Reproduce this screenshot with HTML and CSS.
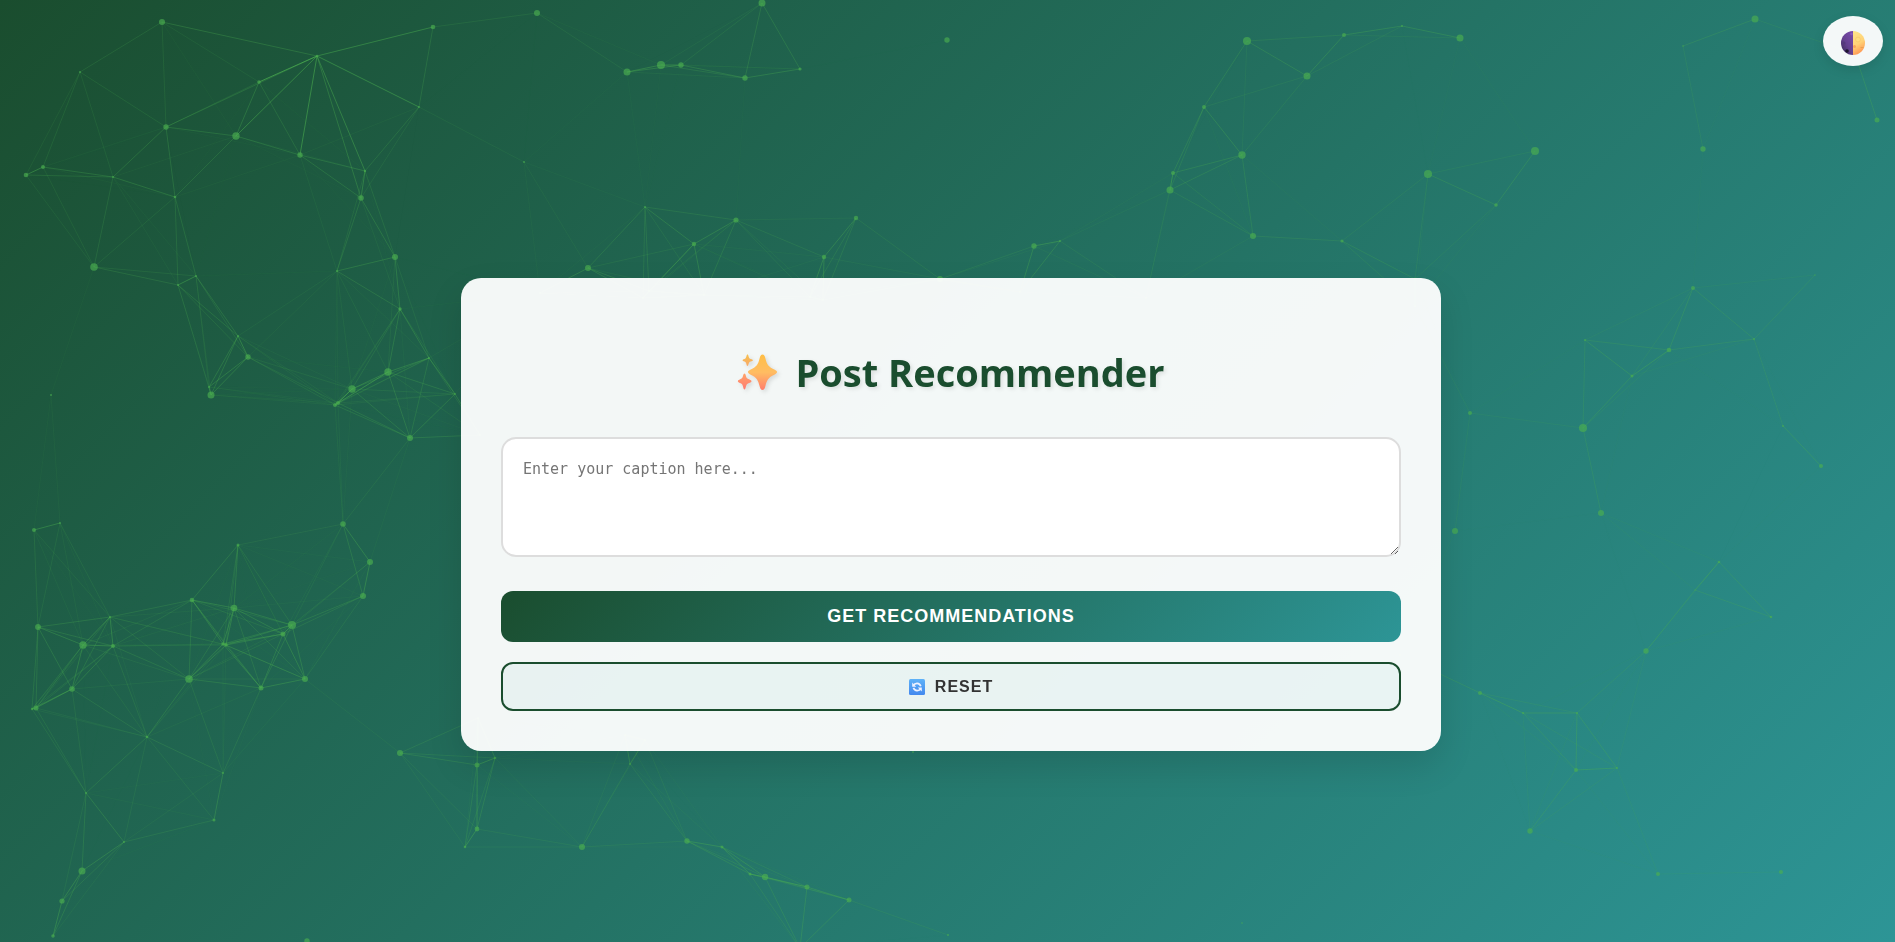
FILE: index.html
```html
<!DOCTYPE html>
<html lang="en">
<head>
<meta charset="utf-8">
<meta name="viewport" content="width=device-width, initial-scale=1">
<title>Post Recommender</title>
<link rel="stylesheet" href="styles.css">
</head>
<body>
<svg class="network" id="network" viewBox="0 0 1895 942" preserveAspectRatio="xMidYMid slice" aria-hidden="true"></svg>

<button class="theme-toggle" type="button" aria-label="Toggle theme">
  <svg class="moon" viewBox="0 0 24 24" aria-hidden="true">
    <defs>
      <linearGradient id="moonLight" x1="0" y1="0" x2="0.3" y2="1">
        <stop offset="0" stop-color="#ffe58a"/><stop offset="0.6" stop-color="#ffd277"/><stop offset="1" stop-color="#ff9a55"/>
      </linearGradient>
      <linearGradient id="moonDark" x1="1" y1="0" x2="0.2" y2="1">
        <stop offset="0" stop-color="#7a4cae"/><stop offset="0.6" stop-color="#64408f"/><stop offset="1" stop-color="#3d2d5c"/>
      </linearGradient>
    </defs>
    <path d="M12 0A12 12 0 0 0 12 24Z" fill="url(#moonDark)"/>
    <path d="M12 0A12 12 0 0 1 12 24Z" fill="url(#moonLight)"/>
    <circle cx="17" cy="8.500" r="2.400" fill="#ffdd80" stroke="#f6c566" stroke-width=".6"/>
    <circle cx="13.500" cy="15.500" r="1.500" fill="#f7a45c"/>
    <ellipse cx="21" cy="16.500" rx="1.800" ry=".5" fill="#e9a04f"/>
    <circle cx="10.500" cy="3" r="1.300" fill="#8a59bd"/>
    <circle cx="6" cy="20" r="1.800" fill="#1d1430"/>
    <circle cx="3" cy="12" r="1.500" fill="#54397c"/>
  </svg>
</button>

<main class="page">
  <section class="card">
    <h1 class="title">
      <svg class="sparkles" viewBox="0 0 40 38" aria-hidden="true">
        <defs>
          <linearGradient id="spark" x1="0" y1="0" x2="0" y2="1">
            <stop offset="0" stop-color="#ffbe45"/><stop offset="0.5" stop-color="#ffbd62"/><stop offset="1" stop-color="#ff7d6c"/>
          </linearGradient>
          <linearGradient id="sparkTop" x1="0" y1="0" x2="0" y2="1">
            <stop offset="0" stop-color="#f6c04e"/><stop offset="1" stop-color="#f9a968"/>
          </linearGradient>
          <linearGradient id="sparkLow" x1="0" y1="0" x2="0" y2="1">
            <stop offset="0" stop-color="#ffa368"/><stop offset="1" stop-color="#ff7a72"/>
          </linearGradient>
        </defs>
        <path fill="url(#spark)" d="M25.500 1.500C27 1.500 27.700 3 28.300 5C29.900 11.500 31.300 13.700 37.300 16.600C39.200 17.500 40 18.200 40 19.100S39.200 20.800 37.300 21.700C31.300 24.500 29.900 26.900 28.300 33.500C27.700 35.500 27 37 25.500 37S23.300 35.500 22.700 33.500C21.100 26.900 19.700 24.500 13.700 21.700C11.800 20.800 11 20 11 19.100S11.800 17.500 13.700 16.600C19.700 13.700 21.100 11.500 22.700 5C23.300 3 24 1.500 25.500 1.500Z"/>
        <path fill="url(#sparkTop)" d="M10.500 1.500C11.600 1.500 11.400 4.300 12.600 5.400C13.600 6.200 16 6.200 16 7.200S13.600 8.200 12.600 9.100C11.400 10.200 11.600 13 10.500 13S9.600 10.200 8.400 9.100C7.400 8.200 5.500 8.200 5.500 7.200S7.400 6.200 8.400 5.400C9.600 4.300 9.400 1.500 10.500 1.500Z"/>
        <path fill="url(#sparkLow)" d="M7.500 20.500C8.900 20.500 8.700 23.900 10.100 25.300C11.600 26.600 14.500 26.800 14.500 28.200S11.600 29.800 10.100 31.100C8.700 32.500 8.900 36.500 7.500 36.500S6.300 32.500 4.900 31.100C3.400 29.800 .800 29.600 .800 28.200S3.400 26.600 4.900 25.300C6.300 23.900 6.100 20.500 7.500 20.500Z"/>
      </svg>
      <span>Post Recommender</span>
    </h1>
    <form class="form">
      <textarea class="caption" aria-label="Caption" placeholder="Enter your caption here..."></textarea>
      <button class="btn btn-primary" type="button">GET RECOMMENDATIONS</button>
      <button class="btn btn-reset" type="reset">
        <svg class="refresh" viewBox="0 0 16 16" aria-hidden="true">
          <defs>
            <linearGradient id="tile" x1="0" y1="0" x2="0" y2="1">
              <stop offset="0" stop-color="#5fb2f8"/><stop offset="1" stop-color="#4388ee"/>
            </linearGradient>
          </defs>
          <rect width="16" height="16" rx="1.500" fill="url(#tile)"/>
          <path d="M4.200 6.600C6.200 3.500 10.500 3.700 11.800 7.300M11.900 9.600C10 12.500 5.800 12.400 4.400 8.900" fill="none" stroke="#eef1ff" stroke-width="1.700"/>
          <path d="M3.200 3.600V7.700H7.200ZM12.800 12.500V8.400H8.800Z" fill="#eef1ff"/>
        </svg>
        <span>RESET</span>
      </button>
    </form>
  </section>
</main>
<script src="network.js"></script>
</body>
</html>
```
FILE: styles.css
```css
* {
  box-sizing: border-box;
}

body {
  margin: 0;
  min-height: 100vh;
  background: linear-gradient(135deg, #1a4d2e, #2d9596) fixed;
  color: #333;
  font-family: "Segoe UI", "Open Sans", "Noto Sans", sans-serif;
}

.network {
  position: fixed;
  inset: 0;
  width: 100%;
  height: 100%;
}

.network line {
  stroke: #4caf50;
  stroke-width: 1;
}

.network circle {
  fill: #4caf50;
  fill-opacity: 0.65;
}

.theme-toggle {
  position: fixed;
  top: 16px;
  right: 12px;
  z-index: 2;
  display: flex;
  align-items: center;
  justify-content: center;
  width: 60px;
  height: 50px;
  padding: 3px 0 0;
  border: 0;
  border-radius: 50%;
  background: rgba(255, 255, 255, 0.95);
  box-shadow: 0 4px 12px rgba(0, 0, 0, 0.1);
  cursor: pointer;
}

.moon {
  width: 24px;
  height: 24px;
}

.page {
  position: relative;
  display: flex;
  align-items: center;
  justify-content: center;
  min-height: 100vh;
  padding: 106px 20px 20px 27px;
}

.card {
  width: 100%;
  max-width: 980px;
  padding: 40px;
  border-radius: 20px;
  background: rgba(255, 255, 255, 0.95);
  box-shadow: 0 15px 35px rgba(0, 0, 0, 0.12);
}

.title {
  display: flex;
  align-items: center;
  justify-content: center;
  gap: 18px;
  margin: 27px 0 38px;
  color: #1a4d2e;
  font-size: 38px;
  font-weight: 700;
  line-height: 54px;
  text-shadow: 2px 2px 4px rgba(0, 0, 0, 0.1);
}

.sparkles {
  width: 40px;
  height: 38px;
  filter: drop-shadow(2px 2px 2px rgba(0, 0, 0, 0.12));
}

.form {
  display: flex;
  flex-direction: column;
  gap: 20px;
}

.caption {
  display: block;
  width: 100%;
  height: 120px;
  margin-bottom: 14px;
  padding: 20px;
  border: 2px solid #ddd;
  border-radius: 15px;
  background: #fff;
  color: #333;
  font-family: Consolas, "DejaVu Sans Mono", monospace;
  font-size: 15px;
  line-height: 20px;
  resize: vertical;
}

.caption::placeholder {
  color: #757575;
}

.btn {
  display: flex;
  align-items: center;
  justify-content: center;
  gap: 10px;
  width: 100%;
  border-radius: 12px;
  font-family: "Liberation Sans", Arial, sans-serif;
  font-weight: 700;
  letter-spacing: 1px;
  cursor: pointer;
}

.btn-primary {
  height: 51px;
  border: 0;
  background: linear-gradient(135deg, #1a4d2e, #2d9596);
  color: #fff;
  font-size: 18px;
}

.btn-reset {
  height: 49px;
  padding: 2px 0 0;
  border: 2px solid #1a4d2e;
  background: rgba(45, 149, 150, 0.05);
  color: #333;
  font-size: 16px;
}

.refresh {
  width: 16px;
  height: 16px;
}
```
FILE: network.js
```js
// Decorative particle network: each entry is [x, y, radius].
const nodes = [
  [162,22,3],[80,72,1],[26,175,2.3],[43,167,2],[166,127,2.7],[113,177,1],[236,136,3.7],[259,82,1.8],
  [433,27,2.3],[419,107,1],[300,155,2.7],[365,171,1.2],[361,198,2.8],[175,197,1.3],[94,267,3.8],
  [337,271,1],[395,257,3],[178,285,1],[196,276,1],[238,336,1],[248,357,2.7],[209,387,1],[211,395,3.5],
  [51,395,1],[335,405,2],[338,403,2],[352,389,3.7],[388,372,3.7],[400,309,1.7],[429,358,1],[455,394,1],
  [410,438,3],[343,524,2.8],[34,530,2],[60,523,1],[238,545,1.5],[370,562,3],[363,596,3],[192,600,2.3],
  [234,608,3.3],[292,625,4],[283,634,2.5],[223,644,1.7],[226,645,1.7],[305,679,3],[261,688,2.5],
  [189,679,3.8],[110,617,1],[38,627,2.9],[83,645,3.7],[113,646,2],[72,689,2.8],[36,708,2.5],[32,709,1.2],
  [147,737,1.3],[86,793,1],[223,773,1],[214,820,1.5],[124,842,1],[82,871,3.5],[62,901,2.6],[53,936,1.8],
  [307,941,2.7],[400,753,3],[477,765,2.5],[495,758,1.3],[477,829,2.4],[465,847,1.3],[582,847,3],
  [630,764,1],[687,841,2.7],[722,847,1.5],[750,874,1.5],[765,877,3.2],[807,887,2.5],[849,900,2.5],
  [948,935,1],[800,948,1],[913,752,1],[537,13,3],[627,72,3.5],[661,65,4],[681,65,2.7],[745,78,2.7],
  [800,69,1.6],[762,3,3.5],[524,162,1],[588,268,3],[645,207,1],[694,244,2.2],[736,220,2.6],[824,257,2.2],
  [856,218,2.2],[947,40,2.7],[1247,41,4],[1344,35,2],[1402,26,1],[1307,76,3.5],[1204,107,2],
  [1242,155,3.7],[1173,173,2],[1170,190,3.5],[1253,236,3],[1342,241,1.6],[1428,174,4],[1060,241,1],
  [1034,246,2.7],[940,279,3],[1415,279,1.5],[1460,38,3.5],[1755,19,3.5],[1683,46,0.8],[1703,149,2.7],
  [1877,120,2.5],[1535,151,4],[1496,205,1.8],[1855,54,1],[1693,288,2],[1815,275,0.7],[1585,340,1],
  [1669,350,2.3],[1632,376,1.5],[1583,428,4],[1754,339,1],[1783,426,1],[1821,466,2],[1470,413,2],
  [1601,513,3],[1455,531,3],[1719,562,1.3],[1695,590,0.6],[1771,617,1.3],[1646,651,2.7],[1480,693,2],
  [1523,713,1],[1577,713,1],[1576,770,2],[1617,768,1],[1530,831,2.7],[1658,874,2],[1781,872,2],
  [1242,923,0.8],[540,293,1],[649,291,1],[643,298,1],[704,295,1],[823,300,1],[810,297,1],
  [1020,292,1],[1146,298,1],[1415,306,1],[1400,655,1],[480,435,1],[478,718,1],[625,735,1],[645,740,1]
];

// The focus point draws brighter links to the particles around it.
const focus = [317, 56];
const reach = 154;
const focusReach = 170;

const svgNS = "http://www.w3.org/2000/svg";
const network = document.getElementById("network");

function add(name, attributes) {
  const element = document.createElementNS(svgNS, name);
  for (const key in attributes) element.setAttribute(key, attributes[key]);
  network.appendChild(element);
}

function link(a, b, opacity) {
  add("line", { x1: a[0], y1: a[1], x2: b[0], y2: b[1], "stroke-opacity": opacity.toFixed(3) });
}

nodes.forEach((a, i) => {
  nodes.slice(i + 1).forEach((b) => {
    const distance = Math.hypot(a[0] - b[0], a[1] - b[1]);
    if (distance < reach) link(a, b, 0.52 * (1 - distance / reach));
  });
  const distance = Math.hypot(a[0] - focus[0], a[1] - focus[1]);
  if (distance < focusReach) link(a, focus, 1 - distance / 230);
  add("circle", { cx: a[0], cy: a[1], r: a[2] });
});
add("circle", { cx: focus[0], cy: focus[1], r: 1.3 });
```
